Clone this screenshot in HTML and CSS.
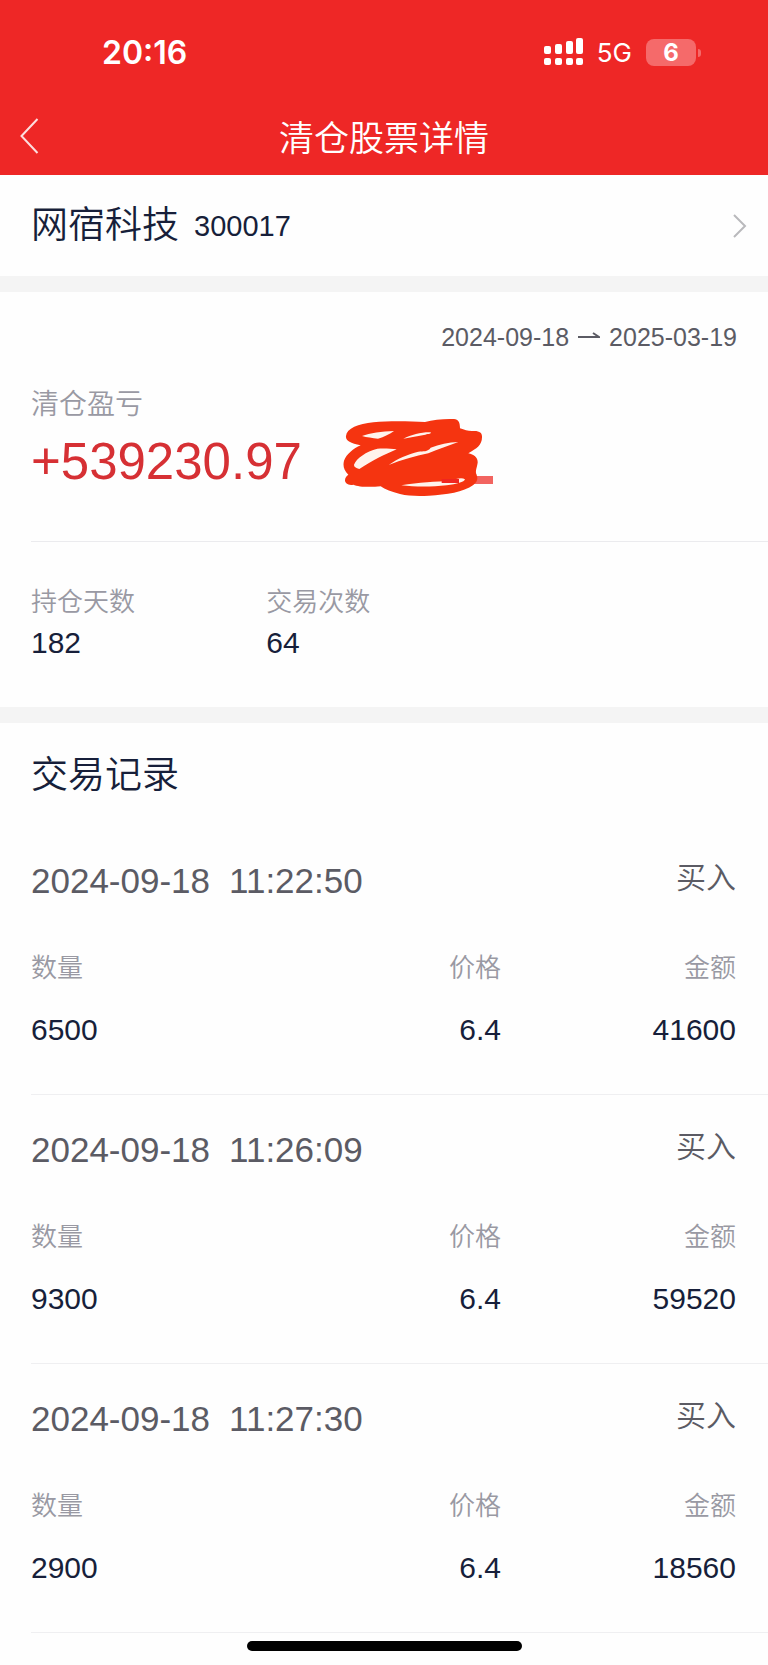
FILE: index.html
```html
<!DOCTYPE html>
<html lang="zh-CN">
<head>
    <meta charset="UTF-8">
    <meta name="viewport" content="width=device-width, initial-scale=1.0">
    <title>清仓股票详情</title>
    <link rel="stylesheet" href="styles.css">
</head>
<body>
    <header class="header">
        <div class="status-bar">
            <span class="clock">20:16</span>
            <div class="status-icons">
                <svg class="signal" width="40" height="28" viewBox="0 0 40 28" fill="#fff">
                    <rect x="0" y="8" width="7" height="8" rx="2"/>
                    <rect x="11" y="6" width="7" height="10" rx="2"/>
                    <rect x="22" y="3" width="7" height="13" rx="2"/>
                    <rect x="32" y="0" width="7" height="16" rx="2"/>
                    <rect x="0" y="20" width="7" height="7" rx="2"/>
                    <rect x="11" y="20" width="7" height="7" rx="2"/>
                    <rect x="22" y="20" width="7" height="7" rx="2"/>
                    <rect x="32" y="20" width="7" height="7" rx="2"/>
                </svg>
                <span class="network">5G</span>
                <div class="battery"><span class="battery-level">6</span></div>
            </div>
        </div>
        <nav class="nav-bar">
            <button type="button" class="back" aria-label="返回">
                <svg width="19" height="36" viewBox="0 0 19 36" fill="none" stroke="#fff" stroke-opacity="0.85" stroke-width="2">
                    <path d="M17.500 1L1.500 18L17.500 35"/>
                </svg>
            </button>
            <h1 class="title">清仓股票详情</h1>
        </nav>
    </header>

    <main>
        <a class="stock" href="#">
            <span class="stock-name">网宿科技</span>
            <span class="stock-code">300017</span>
            <svg class="stock-arrow" width="14" height="24" viewBox="0 0 14 24" fill="none" stroke="#b9b9bc" stroke-width="2">
                <path d="M1 1L12 12L1 23"/>
            </svg>
        </a>

        <section class="summary">
            <div class="period">
                <span>2024-09-18</span>
                <svg width="22" height="12" viewBox="0 0 22 12" fill="none" stroke="#5b5b64" stroke-width="2">
                    <path d="M0 6H21L15 2"/>
                </svg>
                <span>2025-03-19</span>
            </div>
            <div class="profit-label">清仓盈亏</div>
            <div class="profit">
                <span class="profit-value">+539230.97</span>
                <svg class="scribble" width="151" height="80" viewBox="39 354 453 240">
                    <rect x="430" y="528" width="59" height="24" fill="#f26460"/>
                    <path fill="#f53410" d="M48 408C50 385 85 372 130 367C180 362 240 364 285 366C310 358 345 356 372 357C385 358 390 366 390 385C405 390 415 394 430 393C450 392 457 400 456 412C456 435 440 446 415 460C432 464 444 472 443 488C440 505 437 510 438 520C445 535 443 545 430 555C400 577 350 584 297 587C265 589 235 588 210 582C185 576 165 568 152 559C120 562 85 561 70 554C55 557 45 550 45 541C45 532 50 528 55 524C42 512 38 498 42 482C50 462 70 446 92 436C60 430 46 422 48 408Z"/>
                    <g fill="#fff3ec">
                        <path d="M96 408C120 399 155 394 192 393C180 402 162 411 144 416C128 414 110 412 96 408Z"/>
                        <path d="M220 416C245 404 275 396 302 397C305 401 296 402 286 404C264 408 242 412 220 416Z"/>
                        <path d="M72 494C80 474 108 455 142 446C164 445 184 446 200 448C165 463 130 480 88 507C78 504 71 500 72 494Z"/>
                        <path d="M176 495C200 477 235 462 265 455C280 453 293 456 302 443C328 433 355 427 385 426C355 438 325 447 295 460C255 468 215 480 176 495Z"/>
                        <path d="M214 556C265 547 320 545 360 543C380 536 395 532 405 538C403 546 380 552 350 556C305 561 255 561 214 556Z"/>
                    </g>
                    <path fill="#f1251f" d="M335 537H387V549H335Z"/>
                </svg>
            </div>
        </section>

        <dl class="stats">
            <div class="stat">
                <dt>持仓天数</dt>
                <dd>182</dd>
            </div>
            <div class="stat">
                <dt>交易次数</dt>
                <dd>64</dd>
            </div>
        </dl>

        <section class="records">
            <h2 class="records-title">交易记录</h2>

            <article class="record">
                <div class="record-head">
                    <span>2024-09-18</span>
                    <span>11:22:50</span>
                    <span class="record-type">买入</span>
                </div>
                <table class="record-table">
                    <thead>
                        <tr><th>数量</th><th>价格</th><th>金额</th></tr>
                    </thead>
                    <tbody>
                        <tr><td>6500</td><td>6.4</td><td>41600</td></tr>
                    </tbody>
                </table>
            </article>

            <article class="record">
                <div class="record-head">
                    <span>2024-09-18</span>
                    <span>11:26:09</span>
                    <span class="record-type">买入</span>
                </div>
                <table class="record-table">
                    <thead>
                        <tr><th>数量</th><th>价格</th><th>金额</th></tr>
                    </thead>
                    <tbody>
                        <tr><td>9300</td><td>6.4</td><td>59520</td></tr>
                    </tbody>
                </table>
            </article>

            <article class="record">
                <div class="record-head">
                    <span>2024-09-18</span>
                    <span>11:27:30</span>
                    <span class="record-type">买入</span>
                </div>
                <table class="record-table">
                    <thead>
                        <tr><th>数量</th><th>价格</th><th>金额</th></tr>
                    </thead>
                    <tbody>
                        <tr><td>2900</td><td>6.4</td><td>18560</td></tr>
                    </tbody>
                </table>
            </article>
        </section>
    </main>

    <div class="home-indicator"></div>
</body>
</html>
```

FILE: styles.css
```css
* {
    box-sizing: border-box;
}
body {
    margin: 0;
    min-height: 100vh;
    padding-bottom: 32px;
    font-family: "Liberation Sans", "Noto Sans CJK SC", sans-serif;
    font-weight: 350;
    background-color: #fefefe;
    color: #171f3a;
}

/* Header */
.header {
    background-color: #ee2726;
    color: #fff;
    padding-bottom: 7px;
}
.status-bar {
    display: flex;
    justify-content: space-between;
    align-items: center;
    height: 104px;
    padding: 0 72px 0 102px;
    font-family: Inter, sans-serif;
    font-weight: 400;
}
.clock {
    font-size: 32px;
    font-weight: 600;
}
.status-icons {
    display: flex;
    align-items: center;
}
.network {
    margin: 0 14px 0 13px;
    font-size: 26px;
}
.battery {
    position: relative;
    width: 50px;
    height: 27px;
    border-radius: 8px;
    background-color: #f56a6a;
    text-align: center;
}
.battery::after {
    content: "";
    position: absolute;
    right: -5px;
    top: 10px;
    width: 3px;
    height: 8px;
    border-radius: 0 3px 3px 0;
    background-color: #f56a6a;
}
.battery-level {
    display: block;
    line-height: 27px;
    font-size: 24px;
    font-weight: 700;
}
.nav-bar {
    display: grid;
    grid-template-columns: 60px 1fr 60px;
    align-items: center;
    height: 64px;
}
.back {
    display: flex;
    padding: 0 0 0 20px;
    border: none;
    background: none;
    cursor: pointer;
}
.title {
    margin: 0;
    padding-top: 6px;
    font-size: 35px;
    font-weight: 350;
    line-height: 44px;
    text-align: center;
}

/* Stock link */
.stock {
    display: flex;
    align-items: center;
    height: 117px;
    padding: 0 21px 0 31px;
    border-bottom: 16px solid #f4f4f4;
    color: inherit;
    text-decoration: none;
}
.stock-name {
    margin-right: 15px;
    font-size: 37px;
    line-height: 44px;
}
.stock-code {
    font-size: 29px;
    line-height: 44px;
}
.stock-arrow {
    margin-left: auto;
}

/* Summary */
.summary {
    margin-left: 31px;
    padding: 30px 31px 53px 0;
    border-bottom: 1px solid #ebebee;
}
.period {
    display: flex;
    justify-content: flex-end;
    align-items: center;
    gap: 9px;
    font-size: 25px;
    line-height: 30px;
    color: #5b5b64;
}
.profit-label {
    margin: 38px 0 8px;
    font-size: 28px;
    line-height: 30px;
    color: #9999a3;
}
.profit {
    display: flex;
    align-items: center;
    gap: 41px;
    height: 60px;
}
.profit-value {
    padding-top: 8px;
    font-size: 51px;
    line-height: 60px;
    color: #d63034;
}

/* Holding stats */
.stats {
    display: grid;
    grid-template-columns: repeat(3, 1fr);
    margin: 0;
    padding: 42px 31px 46px;
    border-bottom: 16px solid #f4f4f4;
}
.stat dt {
    margin-bottom: 5px;
    font-size: 26px;
    line-height: 36px;
    color: #9999a3;
}
.stat dd {
    margin: 0;
    font-size: 30px;
    line-height: 36px;
}

/* Trade records */
.records-title {
    margin: 0;
    padding: 31px 31px 28px;
    font-size: 37px;
    font-weight: 350;
    line-height: 44px;
}
.record {
    margin-left: 31px;
    padding: 35px 32px 49px 0;
    border-bottom: 1px solid #efeff1;
}
.record-head {
    display: flex;
    align-items: flex-start;
    gap: 19px;
    margin-bottom: 52px;
    font-size: 35px;
    line-height: 40px;
    color: #5b5b64;
}
.record-type {
    margin-left: auto;
    font-size: 30px;
    line-height: 34px;
}
.record-table {
    width: 100%;
    table-layout: fixed;
    border-collapse: collapse;
    text-align: right;
}
.record-table th {
    padding: 0 0 32px;
    font-size: 26px;
    font-weight: 350;
    line-height: 30px;
    text-align: right;
    color: #9999a3;
}
.record-table td {
    padding: 0;
    font-size: 30px;
    line-height: 30px;
}
.record-table th:first-child,
.record-table td:first-child {
    text-align: left;
}

.home-indicator {
    position: fixed;
    left: 50%;
    bottom: 14px;
    width: 275px;
    height: 10px;
    margin-left: -137px;
    border-radius: 5px;
    background-color: #000;
}
```
